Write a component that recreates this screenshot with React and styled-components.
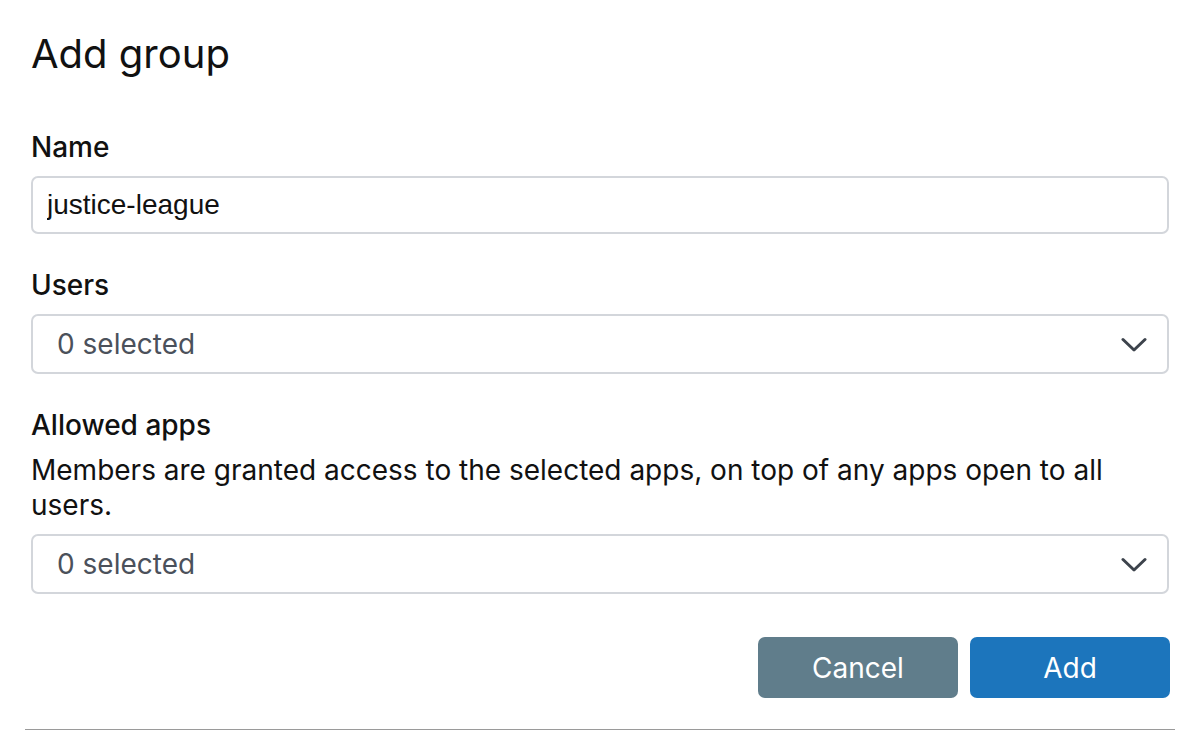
import React from 'react'
import styled, { createGlobalStyle } from 'styled-components';

const GlobalStyle = createGlobalStyle`
   html, body {
      margin: 0;
      padding: 0;
      background: #ffffff;
   }
   body {
      font-family: Inter, "Noto Sans", sans-serif;
      color: #111111;
   }
`;

const Chevron = () => (
   <svg width="26" height="16" viewBox="0 0 26 16" fill="none">
      <path d="M2 2.5 L13 13 L24 2.5" stroke="#3d434c" strokeWidth="3" strokeLinecap="round" strokeLinejoin="round"/>
   </svg>
);

const App = () => {
   return (
      <>
         <GlobalStyle/>
         <StDialog>
            <StTitle>Add group</StTitle>
            <StForm onSubmit={(e) => e.preventDefault()}>
               <StField>
                  <StLabel htmlFor="name">Name</StLabel>
                  <StInput id="name" defaultValue="justice-league"/>
               </StField>
               <StField>
                  <StLabel>Users</StLabel>
                  <StSelect type="button">
                     <span>0 selected</span>
                     <Chevron/>
                  </StSelect>
               </StField>
               <StField>
                  <StLabel>Allowed apps</StLabel>
                  <StHint>Members are granted access to the selected apps, on top of any apps open to all users.</StHint>
                  <StSelect type="button">
                     <span>0 selected</span>
                     <Chevron/>
                  </StSelect>
               </StField>
               <StActions>
                  <StButton type="button" $variant="secondary">Cancel</StButton>
                  <StButton type="submit">Add</StButton>
               </StActions>
            </StForm>
         </StDialog>
      </>
   )
}

const StDialog = styled.div `
   width: 1150px;
   margin: 0 25px;
   padding: 31px 6px 31px;
   box-sizing: border-box;
   border-bottom: 1px solid #9a9a9a;
`;

const StTitle = styled.h1 `
   margin: 0 0 55px;
   font-size: 40px;
   font-weight: 400;
   line-height: 45px;
   color: #111111;
`;

const StForm = styled.form `
   display: flex;
   flex-direction: column;
   gap: 35px;
`;

const StField = styled.div `
   display: flex;
   flex-direction: column;
`;

const StLabel = styled.label `
   font-size: 28px;
   font-weight: 500;
   line-height: 32px;
   margin-bottom: 13px;
   color: #111111;
`;

const StHint = styled.p `
   margin: -1px 0 11px;
   font-size: 28px;
   line-height: 35px;
   color: #111111;
`;

const StInput = styled.input `
   height: 58px;
   box-sizing: border-box;
   border: 2px solid #d3d6db;
   border-radius: 7px;
   padding: 0 14px;
   font-family: "Liberation Sans", Arial, sans-serif;
   font-size: 28px;
   color: #111111;
   outline: none;
`;

const StSelect = styled.button `
   height: 60px;
   box-sizing: border-box;
   display: flex;
   align-items: center;
   justify-content: space-between;
   border: 2px solid #d3d6db;
   border-radius: 7px;
   background: #ffffff;
   padding: 0 20px 0 24px;
   font-family: Inter, "Noto Sans", sans-serif;
   font-size: 28px;
   color: #4b515b;
   cursor: pointer;
   svg {
      margin-top: 2px;
   }
`;

const StActions = styled.div `
   display: flex;
   justify-content: flex-end;
   gap: 12px;
   margin: 8px -1px 0 0;
`;

const StButton = styled.button `
   width: 200px;
   height: 61px;
   border: none;
   border-radius: 7px;
   background: ${props => props.$variant === 'secondary' ? '#607d8b' : '#1c75bc'};
   color: #ffffff;
   font-family: Inter, "Noto Sans", sans-serif;
   font-size: 28px;
   cursor: pointer;
`;

export default App
